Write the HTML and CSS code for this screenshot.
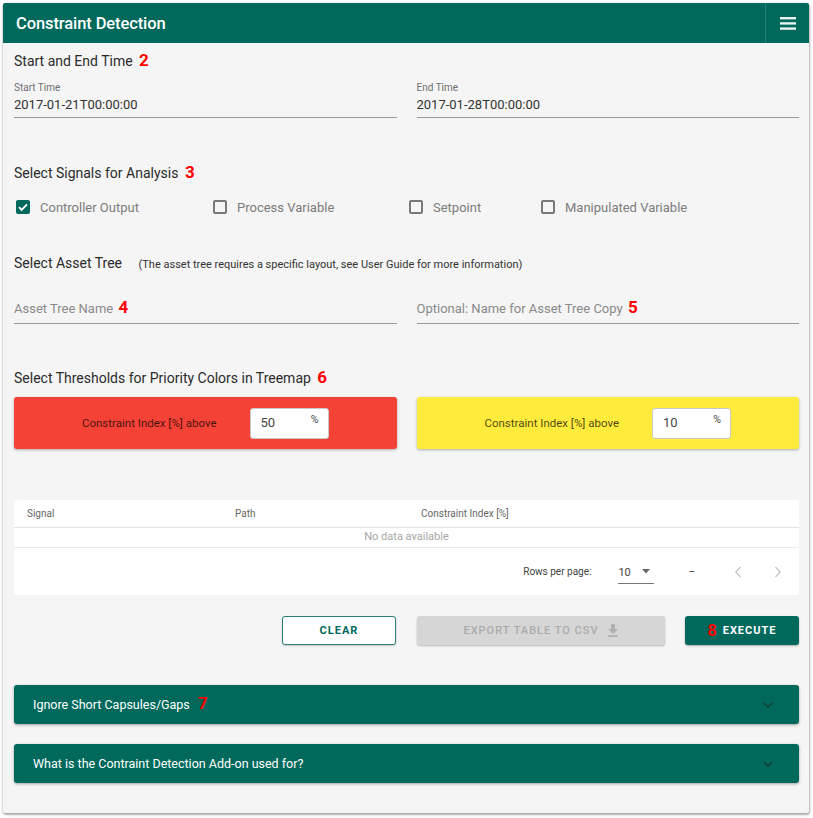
FILE: index.html
```html
<!DOCTYPE html>
<html lang="en">
<head>
<meta charset="utf-8">
<title>Constraint Detection</title>
<link rel="stylesheet" href="styles.css">
</head>
<body>
<div class="card">
  <header class="topbar">
    <div class="title">Constraint Detection</div>
    <div class="menu">
      <svg width="16" height="13" viewBox="0 0 16 13"><rect x="0" y="0" width="16" height="2.4" fill="#e8f3f0"/><rect x="0" y="5.2" width="16" height="2.4" fill="#e8f3f0"/><rect x="0" y="10.4" width="16" height="2.4" fill="#e8f3f0"/></svg>
    </div>
  </header>

  <main class="content">
    <h2 class="heading h-time">Start and End Time <span class="num">2</span></h2>
    <div class="two-col">
      <div class="field">
        <div class="field-label">Start Time</div>
        <div class="field-value">2017-01-21T00:00:00</div>
      </div>
      <div class="field">
        <div class="field-label">End Time</div>
        <div class="field-value">2017-01-28T00:00:00</div>
      </div>
    </div>

    <h2 class="heading h-signals">Select Signals for Analysis <span class="num">3</span></h2>
    <div class="checks">
      <label class="check w197"><span class="box on"><svg width="14" height="14" viewBox="0 0 14 14"><path d="M3 7.2l2.6 2.6L11 4.4" fill="none" stroke="#fff" stroke-width="1.9"/></svg></span>Controller Output</label>
      <label class="check w196"><span class="box"></span>Process Variable</label>
      <label class="check w132"><span class="box"></span>Setpoint</label>
      <label class="check"><span class="box"></span>Manipulated Variable</label>
    </div>

    <h2 class="heading h-asset">Select Asset Tree <span class="note">(The asset tree requires a specific layout, see User Guide for more information)</span></h2>
    <div class="two-col asset">
      <div class="field plain"><span class="placeholder">Asset Tree Name</span> <span class="num">4</span></div>
      <div class="field plain"><span class="placeholder">Optional: Name for Asset Tree Copy</span> <span class="num">5</span></div>
    </div>

    <h2 class="heading h-thresh">Select Thresholds for Priority Colors in Treemap <span class="num">6</span></h2>
    <div class="two-col thresholds">
      <div class="thresh red">
        <span class="thresh-label">Constraint Index [%] above</span>
        <div class="pct-input"><span>50</span><span class="pct">%</span></div>
      </div>
      <div class="thresh yellow">
        <span class="thresh-label">Constraint Index [%] above</span>
        <div class="pct-input"><span>10</span><span class="pct">%</span></div>
      </div>
    </div>

    <section class="table">
      <div class="thead">
        <div class="th">Signal</div>
        <div class="th">Path</div>
        <div class="th">Constraint Index [%]</div>
      </div>
      <div class="empty">No data available</div>
      <div class="tfoot">
        <span class="rpp">Rows per page:</span>
        <span class="select">10
          <svg width="8" height="5" viewBox="0 0 8 5"><path d="M0 0h8L4 4.5z" fill="#666"/></svg>
        </span>
        <span class="dash">–</span>
        <svg class="chev" width="8" height="12" viewBox="0 0 8 12"><path d="M6.5 1L1.8 6l4.7 5" fill="none" stroke="#c4c4c4" stroke-width="1.3"/></svg>
        <svg class="chev" width="8" height="12" viewBox="0 0 8 12"><path d="M1.5 1l4.7 5-4.7 5" fill="none" stroke="#c4c4c4" stroke-width="1.3"/></svg>
      </div>
    </section>

    <div class="actions">
      <button class="btn outline">CLEAR</button>
      <button class="btn disabled">EXPORT TABLE TO CSV
        <svg width="12" height="13" viewBox="0 0 12 13"><path d="M4 0h4v5h3L6 10 1 5h3z" fill="#b0b0b0"/><rect x="1" y="11.3" width="10" height="1.6" fill="#b0b0b0"/></svg>
      </button>
      <button class="btn primary"><span class="num">8</span> EXECUTE</button>
    </div>

    <div class="panel p-first">
      <span>Ignore Short Capsules/Gaps <span class="num">7</span></span>
      <svg width="10" height="6" viewBox="0 0 10 6"><path d="M1 1l4 4 4-4" fill="none" stroke="#1c3b35" stroke-width="1.4"/></svg>
    </div>
    <div class="panel p-second">
      <span>What is the Contraint Detection Add-on used for?</span>
      <svg width="10" height="6" viewBox="0 0 10 6"><path d="M1 1l4 4 4-4" fill="none" stroke="#1c3b35" stroke-width="1.4"/></svg>
    </div>
  </main>
</div>
</body>
</html>
```

FILE: styles.css
```css
* { box-sizing: border-box; }
html, body { margin: 0; padding: 0; background: #fff; }
body {
  font-family: Roboto, "Liberation Sans", sans-serif;
  padding: 3px 4px 5px 3px;
}
.card {
  width: 806px;
  height: 810px;
  background: #f5f5f5;
  box-shadow: 0 1px 3px rgba(0,0,0,.35), 1px 2px 2px rgba(0,0,0,.15);
  border-radius: 2px;
  overflow: hidden;
}
.topbar {
  height: 40px;
  background: #00695c;
  display: flex;
  align-items: center;
  color: #fff;
}
.title {
  flex: 1;
  padding-left: 13px;
  font-size: 16.5px;
  font-weight: 500;
  letter-spacing: -0.1px;
}
.menu {
  width: 44px;
  height: 40px;
  border-left: 1px solid rgba(255,255,255,.14);
  display: flex;
  align-items: center;
  justify-content: center;
  padding-left: 1px;
}
.content {
  padding: 0 10px 0 11px;
}
.heading {
  margin: 0;
  font-size: 14px;
  font-weight: 400;
  line-height: 20px;
  height: 20px;
  color: #2b2b2b;
  white-space: nowrap;
}
.num {
  color: #f00;
  font-family: Roboto, "Liberation Sans", sans-serif;
  font-weight: 700;
  font-size: 17px;
  line-height: 0;
  margin-left: 3px;
}
.h-time { margin-top: 8px; }
.h-signals { margin-top: 45px; }
.h-asset { margin-top: 36px; }
.h-thresh { margin-top: 44px; }
.note {
  font-size: 11px;
  color: #333;
  margin-left: 13px;
}
.two-col {
  display: grid;
  grid-template-columns: 1fr 1fr;
  column-gap: 20px;
}
.field {
  padding-top: 11px;
  padding-bottom: 3px;
  border-bottom: 1px solid #9a9a9a;
}
.field-label {
  font-size: 10px;
  line-height: 12px;
  color: #6f6f6f;
}
.field-value {
  margin-top: 2px;
  font-size: 13px;
  line-height: 18px;
  color: #333;
}
.asset { margin-top: 27px; }
.field.plain {
  padding-top: 0;
  padding-bottom: 5px;
  font-size: 13px;
  line-height: 18px;
  height: 24px;
}
.placeholder { color: #8a8a8a; }
.field.plain .num { margin-left: 2px; }
.checks {
  margin-top: 14px;
  display: flex;
  height: 20px;
  align-items: center;
}
.check {
  display: flex;
  align-items: center;
  font-size: 13px;
  color: #7c7c7c;
  padding-left: 2px;
}
.w197 { width: 197px; }
.w196 { width: 196px; }
.w132 { width: 132px; }
.box {
  width: 14px;
  height: 14px;
  border: 2px solid #7a7a7a;
  border-radius: 2px;
  margin-right: 10px;
  display: flex;
  align-items: center;
  justify-content: center;
}
.box.on {
  background: #00695c;
  border: none;
}
.thresholds { margin-top: 9px; }
.thresh {
  height: 52px;
  border-radius: 3px;
  display: flex;
  align-items: center;
  justify-content: center;
  gap: 33px;
  box-shadow: 0 1px 3px rgba(0,0,0,.3);
}
.red { background: #f44336; }
.yellow { background: #ffeb3b; }
.thresh-label {
  font-size: 11.5px;
  color: rgba(0,0,0,.72);
}
.pct-input {
  width: 79px;
  height: 31px;
  background: #fff;
  border: 1px solid #c8c8c8;
  border-radius: 3px;
  display: flex;
  align-items: center;
  justify-content: space-between;
  padding: 0 9px 2px 10px;
  font-size: 13px;
  color: #444;
}
.pct {
  font-size: 10.5px;
  margin-top: -5px;
}
.table {
  margin-top: 51px;
  background: #fff;
  border-radius: 3px;
}
.thead {
  display: grid;
  grid-template-columns: 208px 186px 1fr;
  height: 28px;
  border-bottom: 1px solid #e3e3e3;
  align-items: center;
}
.th {
  font-size: 10px;
  color: #666;
  padding-left: 13px;
}
.empty {
  height: 20px;
  line-height: 18px;
  text-align: center;
  font-size: 11px;
  color: #a6a6a6;
  border-bottom: 1.5px solid #ebebeb;
}
.tfoot {
  height: 47px;
  display: flex;
  align-items: center;
  justify-content: flex-end;
  padding-right: 17px;
  font-size: 10px;
  color: #444;
}
.rpp { margin-right: 27px; }
.select {
  width: 36px;
  height: 22px;
  border-bottom: 1px solid #777;
  display: flex;
  align-items: center;
  justify-content: space-between;
  padding-right: 4px;
  margin-top: 2px;
  font-size: 11px;
}
.select svg { margin-bottom: 1px; }
.dash { margin-left: 34px; margin-right: 39px; }
.chev + .chev { margin-left: 32px; }
.actions {
  margin-top: 21px;
  display: flex;
  justify-content: flex-end;
  gap: 20px;
}
.btn {
  height: 29px;
  border-radius: 3px;
  font-family: Roboto, "Liberation Sans", sans-serif;
  font-size: 11px;
  font-weight: 700;
  letter-spacing: 1px;
  display: flex;
  align-items: center;
  justify-content: center;
  gap: 8px;
  padding: 0;
}
.outline {
  width: 114px;
  background: #fff;
  color: #00695c;
  border: 1px solid #2a7d71;
  box-shadow: 0 1px 2px rgba(0,0,0,.2);
}
.disabled {
  width: 248px;
  background: #d6d6d6;
  color: #ababab;
  border: none;
  font-weight: 500;
  box-shadow: 0 1px 2px rgba(0,0,0,.25);
  margin-left: 1px;
}
.primary {
  width: 114px;
  background: #00695c;
  color: #fff;
  border: none;
  gap: 4px;
  box-shadow: 0 1px 2px rgba(0,0,0,.3);
}
.primary .num { font-size: 16px; margin: 0 2px 0 0; letter-spacing: 0; }
.panel {
  height: 39px;
  background: #00695c;
  border-radius: 3px;
  box-shadow: 0 1px 3px rgba(0,0,0,.35);
  display: flex;
  align-items: center;
  justify-content: space-between;
  padding: 0 26px 0 19px;
  color: #fff;
  font-size: 12.5px;
}
.panel .num { margin-left: 5px; }
.p-first { margin-top: 40px; }
.p-second { margin-top: 20px; }
```
